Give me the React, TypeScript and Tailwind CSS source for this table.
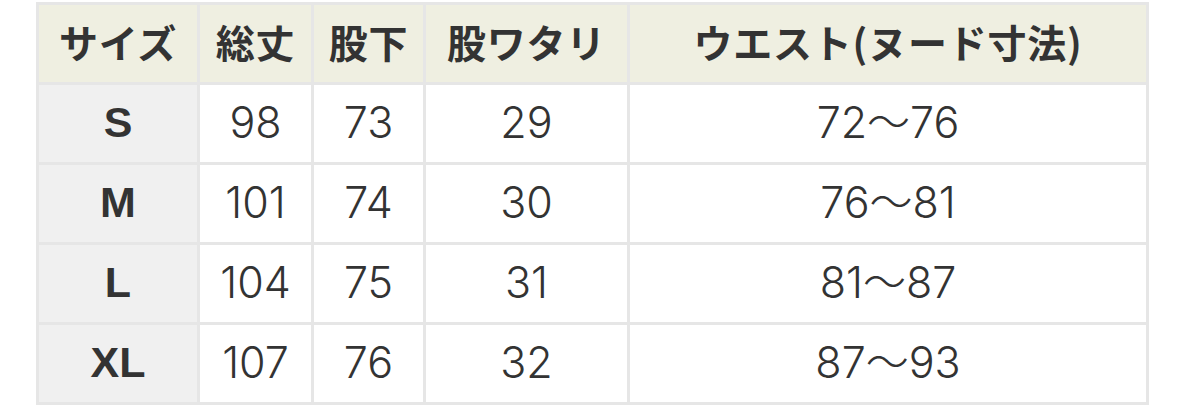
const headers = ['サイズ', '総丈', '股下', '股ワタリ', 'ウエスト(ヌード寸法)']

const rows = [
  ['S', '98', '73', '29', '72〜76'],
  ['M', '101', '74', '30', '76〜81'],
  ['L', '104', '75', '31', '81〜87'],
  ['XL', '107', '76', '32', '87〜93'],
]

export default function App() {
  return (
    <div className="w-[1177px] h-[407px] bg-white pt-[2px] pl-[36px] text-[#333] font-['Noto_Sans_CJK_JP','Noto_Sans',sans-serif]">
      <div className="w-[1113px] grid grid-cols-[158px_111px_109px_201px_516px] auto-rows-[77px] gap-[3px] p-[3px] bg-[#e6e6e6]">
        {headers.map((h) => (
          <div key={h} className="bg-[#efefe1] flex items-center justify-center text-[39px] font-bold tracking-[0.02em] pb-[4px]">
            {h}
          </div>
        ))}
        {rows.map((r) =>
          r.map((c, i) =>
            i === 0 ? (
              <div
                key={r[0] + i}
                className="bg-[#f0f0f0] flex items-center justify-center text-[43px] font-bold pb-[2px] font-['Liberation_Sans',sans-serif]"
              >
                {c}
              </div>
            ) : (
              <div
                key={r[0] + i}
                className="bg-white flex items-center justify-center text-[43px] font-light pb-[2px] font-['Inter','Noto_Sans_CJK_JP',sans-serif]"
              >
                {c}
              </div>
            )
          )
        )}
      </div>
    </div>
  )
}
